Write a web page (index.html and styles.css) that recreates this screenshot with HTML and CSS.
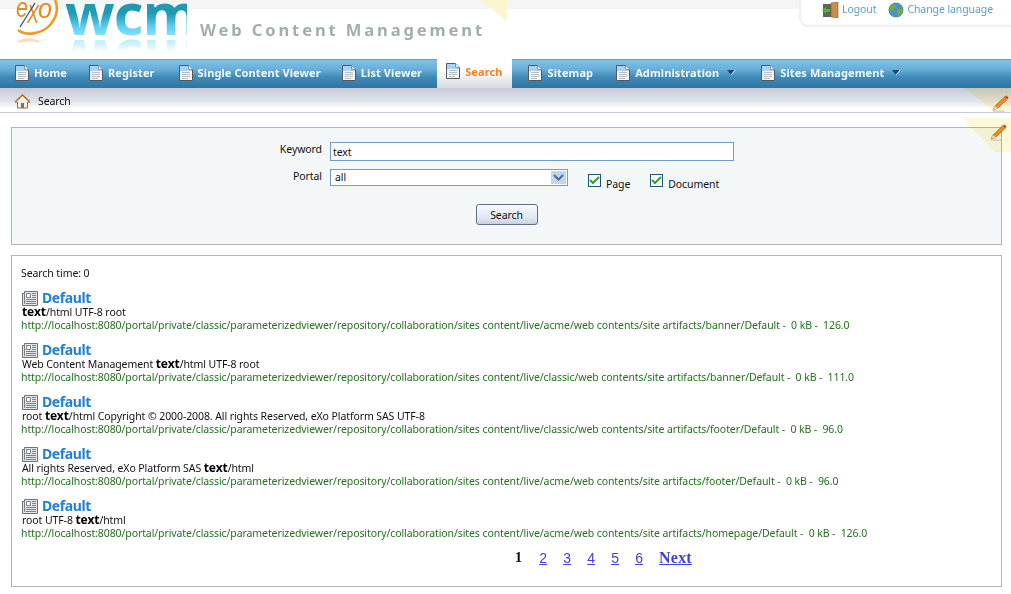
FILE: index.html
```html
<!DOCTYPE html>
<html lang="en">
<head>
<meta charset="utf-8">
<title>Search</title>
<link rel="stylesheet" href="styles.css">
</head>
<body>
<svg class="defs" width="0" height="0" aria-hidden="true">
  <defs>
    <symbol id="doc" viewBox="0 0 14 16">
      <path d="M.5.5H9.5L13.5 4.5V15.5H.5Z" fill="#f4f5f6" stroke="#56595e"/>
      <path d="M1 1H9V5H13V6H1Z" fill="#a9d3f5"/>
      <path d="M9.500.5V4.500H13.500" fill="#fff" stroke="#8a8d92"/>
      <path d="M3 7.500H11M3 9.500H11M3 11.500H11M3 13.500H9" stroke="#b9bec5"/>
    </symbol>
    <symbol id="pencil" viewBox="0 0 17 17">
      <path d="M1 15 3 11 13 1.500 15.500 4 6 13Z" fill="#f08a1d" stroke="#a85a10" stroke-width=".7"/>
      <path d="M13 1.500 14.500 .5 16.500 2.500 15.500 4Z" fill="#d8342c"/>
      <path d="M1 15 3 11 6 13Z" fill="#f2d9ae"/>
      <path d="M1 16H12" stroke="#b8bcc0"/>
    </symbol>
    <symbol id="news" viewBox="0 0 16 15">
      <path d="M.5 2.500H2.500V.5H15.500V14.500H.5Z" fill="#e4e5e6" stroke="#6d7074"/>
      <path d="M2.500 2.500V13" stroke="#7d8084"/>
      <path d="M4 2H9V7H4Z" fill="#8a8d91"/>
      <path d="M5 3H8V6H5Z" fill="#f4f4f4"/>
      <path d="M10 2.500H14M10 4.500H14M10 6.500H14M4 8.500H14M4 10.500H14M4 12.500H14" stroke="#7d8084"/>
    </symbol>
    <symbol id="arrow" viewBox="0 0 9 6">
      <path d="M0 0H9L4.500 5.500Z" fill="#0f4d7c"/>
      <path d="M4.500 5.500 9 0H7.500L4 4.500Z" fill="#cfe5f3"/>
    </symbol>
  </defs>
</svg>

<header class="top">
  <div class="logo">
    <svg class="exo" viewBox="15 0 48 48" width="48" height="48" aria-label="eXo logo">
      <path d="M55 0C59 9 56 18 50 25 43 33 27 37 18 30" fill="none" stroke="#f09a23" stroke-width="2.600"/>
      <path d="M18 41C24 37 35 37 43 43 35 41 26 41 18 43Z" fill="#f6d2a0" opacity=".75"/>
      <text x="16" y="17" class="exo-e" textLength="12" lengthAdjust="spacingAndGlyphs">e</text>
      <text x="27" y="23" class="exo-x" textLength="12" lengthAdjust="spacingAndGlyphs">X</text>
      <text x="38" y="18" class="exo-e" textLength="14" lengthAdjust="spacingAndGlyphs">o</text>
      <path d="M20 27 35 3" stroke="#2a4a9a" stroke-width="1.300"/>
    </svg>
    <div class="wcm"><span class="wcm-main">wcm</span></div>
    <div class="tagline">Web Content Management</div>
  </div>
  <div class="user">
    <a class="user-link" href="#">
      <svg width="17" height="16" viewBox="0 0 17 16"><path d="M1 2H10V15H1Z" fill="#5f6650"/><path d="M9 1 16 0V16L9 15Z" fill="#c98f4a" stroke="#8a5c28" stroke-width=".6"/><path d="M0 8 4 5V7H8V10H4V12Z" fill="#4fb53a"/></svg>
      Logout</a>
    <a class="user-link" href="#">
      <svg width="16" height="16" viewBox="0 0 16 16"><circle cx="8" cy="8" r="7.500" fill="#4f8fc6"/><path d="M3 3C6 2 8 3 8 5 7 7 5 6 5 9 3 9 2 7 1.500 6ZM10 7C13 6 14.500 7 15 9 14 12 12 14 10 14 10 11 8 9 10 7Z" fill="#6fb03c"/></svg>
      Change language</a>
  </div>
</header>

<nav class="nav">
  <a class="nav-item" href="#"><svg class="doc"><use href="#doc"/></svg>Home</a>
  <a class="nav-item item-register" href="#"><svg class="doc"><use href="#doc"/></svg>Register</a>
  <a class="nav-item item-single" href="#"><svg class="doc"><use href="#doc"/></svg>Single Content Viewer</a>
  <a class="nav-item" href="#"><svg class="doc"><use href="#doc"/></svg>List Viewer</a>
  <a class="nav-item active" href="#"><svg class="doc"><use href="#doc"/></svg>Search</a>
  <a class="nav-item item-sitemap" href="#"><svg class="doc"><use href="#doc"/></svg>Sitemap</a>
  <a class="nav-item has-arrow" href="#"><svg class="doc"><use href="#doc"/></svg>Administration<svg class="arrow"><use href="#arrow"/></svg></a>
  <a class="nav-item has-arrow" href="#"><svg class="doc"><use href="#doc"/></svg>Sites Management<svg class="arrow"><use href="#arrow"/></svg></a>
</nav>

<div class="crumb">
  <svg width="17" height="15" viewBox="0 0 17 15"><path d="M8.500 1 1 8H3.500V14H13.500V8H16Z" fill="#f3efe6" stroke="#9a7040"/><path d="M1 8 8.500 1 16 8" fill="none" stroke="#a8743a" stroke-width="1.500"/><path d="M7 9H10V14H7Z" fill="#6f7478"/></svg>
  <span>Search</span>
  <svg class="crumb-edit"><use href="#pencil"/></svg>
</div>

<main class="page">
  <section class="form-panel">
    <svg class="panel-edit"><use href="#pencil"/></svg>
    <form class="search-form">
      <div class="form-row keyword-row">
        <label class="form-label">Keyword</label>
        <div class="fake-input">text</div>
      </div>
      <div class="form-row portal-row">
        <label class="form-label">Portal</label>
        <div class="fake-select">all
          <span class="select-btn"><svg width="11" height="7" viewBox="0 0 11 7"><path d="M1 1 5.500 5.500 10 1" fill="none" stroke="#4f6a8f" stroke-width="2"/></svg></span>
        </div>
        <span class="check first"><span class="box"><svg width="11" height="9" viewBox="0 0 11 9"><path d="M1 4 4 7 10 1" fill="none" stroke="#2aa12a" stroke-width="2"/></svg></span><span class="check-label">Page</span></span>
        <span class="check"><span class="box"><svg width="11" height="9" viewBox="0 0 11 9"><path d="M1 4 4 7 10 1" fill="none" stroke="#2aa12a" stroke-width="2"/></svg></span><span class="check-label">Document</span></span>
      </div>
      <div class="btn-row"><button class="btn" type="button">Search</button></div>
    </form>
  </section>

  <section class="results">
    <div class="time">Search time: 0</div>

    <article class="result">
      <h3 class="result-title"><svg class="news"><use href="#news"/></svg><a href="#">Default</a></h3>
      <p class="excerpt"><b>text</b>/html UTF-8 root</p>
      <p class="url">http://localhost:8080/portal/private/classic/parameterizedviewer/repository/collaboration/sites content/live/acme/web contents/site artifacts/banner/Default -&nbsp; 0 kB -&nbsp; 126.0</p>
    </article>
    <article class="result">
      <h3 class="result-title"><svg class="news"><use href="#news"/></svg><a href="#">Default</a></h3>
      <p class="excerpt">Web Content Management <b>text</b>/html UTF-8 root</p>
      <p class="url">http://localhost:8080/portal/private/classic/parameterizedviewer/repository/collaboration/sites content/live/classic/web contents/site artifacts/banner/Default -&nbsp; 0 kB -&nbsp; 111.0</p>
    </article>
    <article class="result">
      <h3 class="result-title"><svg class="news"><use href="#news"/></svg><a href="#">Default</a></h3>
      <p class="excerpt">root <b>text</b>/html Copyright © 2000-2008. All rights Reserved, eXo Platform SAS UTF-8</p>
      <p class="url">http://localhost:8080/portal/private/classic/parameterizedviewer/repository/collaboration/sites content/live/classic/web contents/site artifacts/footer/Default -&nbsp; 0 kB -&nbsp; 96.0</p>
    </article>
    <article class="result">
      <h3 class="result-title"><svg class="news"><use href="#news"/></svg><a href="#">Default</a></h3>
      <p class="excerpt">All rights Reserved, eXo Platform SAS <b>text</b>/html</p>
      <p class="url">http://localhost:8080/portal/private/classic/parameterizedviewer/repository/collaboration/sites content/live/acme/web contents/site artifacts/footer/Default -&nbsp; 0 kB -&nbsp; 96.0</p>
    </article>
    <article class="result">
      <h3 class="result-title"><svg class="news"><use href="#news"/></svg><a href="#">Default</a></h3>
      <p class="excerpt">root UTF-8 <b>text</b>/html</p>
      <p class="url">http://localhost:8080/portal/private/classic/parameterizedviewer/repository/collaboration/sites content/live/acme/web contents/site artifacts/homepage/Default -&nbsp; 0 kB -&nbsp; 126.0</p>
    </article>

    <div class="pager">
      <b>1</b><a href="#">2</a><a href="#">3</a><a href="#">4</a><a href="#">5</a><a href="#">6</a><a class="next" href="#">Next</a>
    </div>
  </section>
</main>
</body>
</html>
```
FILE: styles.css
```css
* { box-sizing: border-box; }
html, body { margin: 0; padding: 0; }
body {
  width: 1011px;
  height: 594px;
  overflow: hidden;
  background: #fff;
  color: #111;
  font: 10.5px/13px "Noto Sans", "DejaVu Sans", sans-serif;
  letter-spacing: -.09px;
}
.defs { position: absolute; }
a { color: inherit; text-decoration: none; }

/* header */
.top {
  height: 59px;
  display: flex;
  justify-content: space-between;
  position: relative;
  overflow: hidden;
  background: linear-gradient(#f4f6f6 9px, #fff 9px);
}
.top::before {
  content: "";
  position: absolute;
  left: 480px;
  top: 0;
  width: 27px;
  height: 21px;
  background: linear-gradient(to top right, transparent 50%, #faf6d0 50%);
}
.top::after {
  content: "";
  position: absolute;
  right: 0;
  top: 0;
  width: 19px;
  height: 16px;
  background: linear-gradient(to top right, transparent 50%, #faf6d0 50%);
}
.logo { display: flex; align-items: flex-start; position: relative; letter-spacing: 0; }
.exo { margin: 0 0 0 15px; flex: none; overflow: hidden; }
.exo-e { font: italic 27px "Liberation Sans", sans-serif; fill: #e8891c; }
.exo-x { font: italic 25px "Liberation Sans", sans-serif; fill: #e8891c; }
.wcm { width: 122px; margin-left: 2px; height: 50px; }
.wcm-main {
  display: block;
  margin-top: -11.500px;
  font: 700 58px/48px "Open Sans", sans-serif;
  letter-spacing: -1px;
  color: transparent;
  background-image: linear-gradient(#1f9ab2 0 50%, #33add0 62%, #5ccdf0 78%, #8fe3fb 100%);
  -webkit-background-clip: text;
  background-clip: text;
  -webkit-box-reflect: below 1px linear-gradient(transparent 72%, rgba(255,255,255,.6));
}
.tagline {
  margin: 20px 0 0 13px;
  font: 700 16.500px/20px "Noto Sans", sans-serif;
  letter-spacing: 2.900px;
  color: #a3adb0;
  white-space: nowrap;
}
.user {
  width: 212px;
  height: 27px;
  padding: 2px 0 0 21px;
  display: flex;
  gap: 12px;
  background: #fff;
  border-left: 2px solid #eef1f3;
  border-bottom: 2px solid #eef1f3;
  border-bottom-left-radius: 9px;
  color: #5a9ec8;
  position: relative;
  z-index: 1;
}
.user-link { display: flex; align-items: flex-start; gap: 3px; line-height: 15px; white-space: nowrap; }

/* nav */
.nav {
  height: 29px;
  display: flex;
  align-items: stretch;
  padding-left: 15px;
  background: linear-gradient(#5ba3cf 0 1px, #7fc0e6 1px, #6bafd8 10px, #3f8bb9 18px, #30749f 100%);
}
.nav-item {
  display: flex;
  align-items: center;
  gap: 5px;
  margin-right: 22px;
  padding-bottom: 2px;
  color: #f2f8fc;
  font-size: 11px;
  font-weight: 700;
  letter-spacing: .1px;
  white-space: nowrap;
}
.item-register { margin-right: 24px; }
.item-single { margin-right: 21px; }
.item-sitemap { margin-right: 23px; }
.has-arrow { margin-right: 25px; }
.doc { width: 14px; height: 16px; flex: none; }
.arrow { width: 9px; height: 6px; margin-left: 3px; flex: none; }
.nav-item.active {
  margin: -4px 16px 0 -7px;
  padding: 0 10px 3px 9px;
  height: 33px;
  background: linear-gradient(#fff 0 14px, #d5d8e1 100%);
  border-top: 2px solid #f7941e;
  color: #f7801e;
}

/* breadcrumb */
.crumb {
  height: 25px;
  display: flex;
  align-items: center;
  gap: 7px;
  padding: 3px 0 0 14px;
  border-bottom: 1px solid #c6cad8;
  background: linear-gradient(#c6c9d6, #e4e6ec 14px, #f4f5f7 18px, #fff 20px);
  position: relative;
}
.crumb::before {
  content: "";
  position: absolute;
  right: 0;
  top: 0;
  width: 46px;
  height: 24px;
  background: #fdf9d8;
  mix-blend-mode: multiply;
  clip-path: polygon(0 0, 100% 0, 100% 100%, 30px 100%);
}
.crumb-edit {
  position: absolute;
  right: 2px;
  top: 7px;
  width: 17px;
  height: 17px;
}

/* page */
.page { padding: 14px 9px 0 11px; }
.form-panel {
  height: 118px;
  border: 1px solid #b5b5b5;
  background: #f4f7f7;
  position: relative;
}
.form-panel::before {
  content: "";
  position: absolute;
  right: -10px;
  top: -10px;
  width: 49px;
  height: 34px;
  background: #fdf9d8;
  mix-blend-mode: multiply;
  clip-path: polygon(0 0, 100% 0, 100% 100%, 33px 100%);
}
.panel-edit {
  position: absolute;
  right: -6px;
  top: -4px;
  width: 17px;
  height: 17px;
  z-index: 1;
}
.search-form { padding-top: 14px; }
.form-row { display: flex; }
.form-label { width: 318px; text-align: right; padding: 1px 8px 0 0; }
.fake-input {
  width: 404px;
  height: 19px;
  border: 1px solid #6f9ec2;
  background: #fff;
  padding: 3px 0 0 2px;
}
.portal-row { margin-top: 8px; height: 35px; }
.fake-select {
  width: 238px;
  height: 17px;
  border: 1px solid #6f9ec2;
  background: #fff;
  padding: 1px 0 0 4px;
  position: relative;
}
.select-btn {
  position: absolute;
  right: 1px;
  top: 1px;
  width: 15px;
  height: 13px;
  background: #c3d4ee;
  display: flex;
  align-items: center;
  justify-content: center;
}
.check { display: flex; align-items: flex-start; margin-left: 20px; }
.box {
  width: 13px;
  height: 13px;
  border: 1px solid #1c5180;
  background: #fff;
  display: flex;
  align-items: center;
  justify-content: center;
  margin-top: 5px;
}
.check-label { margin: 9px 0 0 5px; }
.btn-row { display: flex; justify-content: center; }
.btn {
  width: 62px;
  height: 21px;
  padding: 1px 0 0;
  border: 1px solid #5f7186;
  border-radius: 3px;
  background: linear-gradient(#f8fbfe, #dfe6f2 70%, #c7d0e0);
  color: #111;
  font: inherit;
  letter-spacing: inherit;
}
.results {
  height: 332px;
  margin-top: 10px;
  padding: 11px 9px 0;
  border: 1px solid #b5b5b5;
  background: #fff;
}
.time { margin-bottom: 10px; }
.result { margin: 0 0 10px; }
.result-title {
  display: flex;
  align-items: center;
  gap: 4px;
  height: 16px;
  margin: 0;
  padding-left: 1px;
  font: 700 14px/16px "Noto Sans", sans-serif;
  letter-spacing: -.4px;
  color: #1f7fd6;
}
.news { width: 16px; height: 15px; flex: none; }
.excerpt { margin: 0; padding-left: 1px; }
.excerpt b { color: #000; font-size: 12px; line-height: 12px; }
.url { margin: 0; color: #23721c; white-space: nowrap; }
.pager {
  display: flex;
  gap: 16.200px;
  margin: -1px 0 0 494px;
  font: 14px/18px "Liberation Sans", sans-serif;
  letter-spacing: 0;
  color: #000;
}
.pager b { font-family: "Liberation Serif", serif; width: 8px; }
.pager a { color: #4040e0; text-decoration: underline; }
.pager .next { font: 700 16px/18px "Liberation Serif", serif; letter-spacing: .2px; }
```
